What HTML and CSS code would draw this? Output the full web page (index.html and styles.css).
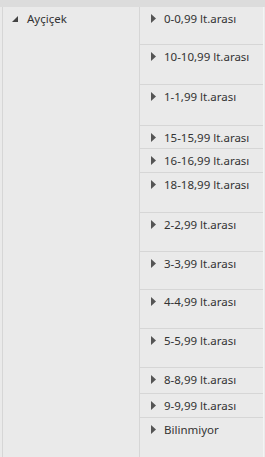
FILE: index.html
```html
<!DOCTYPE html>
<html lang="tr">
<head>
    <meta charset="UTF-8">
    <meta name="viewport" content="width=device-width, initial-scale=1.0">
    <title>Matris</title>
    <link rel="stylesheet" href="styles.css">
</head>
<body>
    <div class="header-bar"></div>

    <div class="matrix">
        <div class="group-cell">
            <span class="expanded-icon">
                <svg width="6" height="6" viewBox="0 0 6 6"><polygon points="6,0 6,6 0,6" fill="#444"/></svg>
            </span>
            <span class="label">Ayçiçek</span>
        </div>

        <div class="sub-rows">
            <div class="sub-row" style="height: 38px">
                <span class="collapsed-icon"><svg width="5" height="9" viewBox="0 0 5 9"><polygon points="0,0 5,4.5 0,9" fill="#555"/></svg></span>
                <span class="label">0-0,99 lt.arası</span>
            </div>
            <div class="sub-row" style="height: 40px">
                <span class="collapsed-icon"><svg width="5" height="9" viewBox="0 0 5 9"><polygon points="0,0 5,4.5 0,9" fill="#555"/></svg></span>
                <span class="label">10-10,99 lt.arası</span>
            </div>
            <div class="sub-row" style="height: 41px">
                <span class="collapsed-icon"><svg width="5" height="9" viewBox="0 0 5 9"><polygon points="0,0 5,4.5 0,9" fill="#555"/></svg></span>
                <span class="label">1-1,99 lt.arası</span>
            </div>
            <div class="sub-row" style="height: 23px">
                <span class="collapsed-icon"><svg width="5" height="9" viewBox="0 0 5 9"><polygon points="0,0 5,4.5 0,9" fill="#555"/></svg></span>
                <span class="label">15-15,99 lt.arası</span>
            </div>
            <div class="sub-row" style="height: 24px">
                <span class="collapsed-icon"><svg width="5" height="9" viewBox="0 0 5 9"><polygon points="0,0 5,4.5 0,9" fill="#555"/></svg></span>
                <span class="label">16-16,99 lt.arası</span>
            </div>
            <div class="sub-row" style="height: 40px">
                <span class="collapsed-icon"><svg width="5" height="9" viewBox="0 0 5 9"><polygon points="0,0 5,4.5 0,9" fill="#555"/></svg></span>
                <span class="label">18-18,99 lt.arası</span>
            </div>
            <div class="sub-row" style="height: 40px">
                <span class="collapsed-icon"><svg width="5" height="9" viewBox="0 0 5 9"><polygon points="0,0 5,4.5 0,9" fill="#555"/></svg></span>
                <span class="label">2-2,99 lt.arası</span>
            </div>
            <div class="sub-row" style="height: 38px">
                <span class="collapsed-icon"><svg width="5" height="9" viewBox="0 0 5 9"><polygon points="0,0 5,4.5 0,9" fill="#555"/></svg></span>
                <span class="label">3-3,99 lt.arası</span>
            </div>
            <div class="sub-row" style="height: 39px">
                <span class="collapsed-icon"><svg width="5" height="9" viewBox="0 0 5 9"><polygon points="0,0 5,4.5 0,9" fill="#555"/></svg></span>
                <span class="label">4-4,99 lt.arası</span>
            </div>
            <div class="sub-row" style="height: 39px">
                <span class="collapsed-icon"><svg width="5" height="9" viewBox="0 0 5 9"><polygon points="0,0 5,4.5 0,9" fill="#555"/></svg></span>
                <span class="label">5-5,99 lt.arası</span>
            </div>
            <div class="sub-row" style="height: 26px">
                <span class="collapsed-icon"><svg width="5" height="9" viewBox="0 0 5 9"><polygon points="0,0 5,4.5 0,9" fill="#555"/></svg></span>
                <span class="label">8-8,99 lt.arası</span>
            </div>
            <div class="sub-row" style="height: 24px">
                <span class="collapsed-icon"><svg width="5" height="9" viewBox="0 0 5 9"><polygon points="0,0 5,4.5 0,9" fill="#555"/></svg></span>
                <span class="label">9-9,99 lt.arası</span>
            </div>
            <div class="sub-row last" style="height: 39px">
                <span class="collapsed-icon"><svg width="5" height="9" viewBox="0 0 5 9"><polygon points="0,0 5,4.5 0,9" fill="#555"/></svg></span>
                <span class="label">Bilinmiyor</span>
            </div>
        </div>
    </div>
</body>
</html>
```

FILE: styles.css
```css
body {
    margin: 0;
    font-family: 'Noto Sans', 'Open Sans', sans-serif;
    font-size: 11px;
    color: #333;
    background-color: #eaeaea;
    height: 457px;
    overflow: hidden;
}

.header-bar {
    height: 7px;
    background-color: #dcdcdc;
}

.matrix {
    display: flex;
    margin-left: 2px;
    border-left: 1px solid #d6d6d6;
    height: 450px;
}

.group-cell {
    width: 136px;
    display: flex;
    align-items: flex-start;
    padding-top: 3px;
    border-right: 1px solid #d6d6d6;
}

.expanded-icon {
    display: flex;
    margin: 6px 9px 0 9px;
}

.sub-rows {
    flex: 1;
    display: flex;
    flex-direction: column;
    border-right: 1px solid #f4f4f4;
    margin-right: 1px;
}

.sub-row {
    display: flex;
    align-items: flex-start;
    box-sizing: border-box;
    padding-top: 3px;
    border-bottom: 1px solid #d6d6d6;
}

.sub-row.last {
    border-bottom: none;
}

.collapsed-icon {
    display: flex;
    margin: 4px 8px 0 11px;
}

.label {
    font-size: 11.5px;
    line-height: 17px;
    white-space: nowrap;
}
```
